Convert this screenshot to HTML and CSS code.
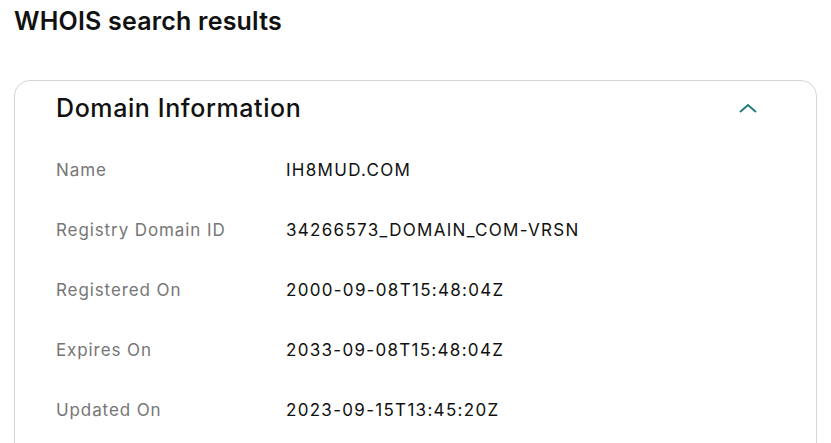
FILE: index.html
```html
<!DOCTYPE html>
<html>
<head>
<meta charset="utf-8">
<link rel="stylesheet" href="styles.css">
</head>
<body>
<div class="page">
  <h1 class="title">WHOIS search results</h1>
  <section class="card">
    <div class="card-head">
      <h2 class="card-title">Domain Information</h2>
      <svg class="chevron" width="20" height="12" viewBox="0 0 20 12"><path d="M2 10 L10 3 L18 10" fill="none" stroke="#1b7b7b" stroke-width="1.8"/></svg>
    </div>
    <div class="rows">
      <div class="row"><span class="label">Name</span><span class="value">IH8MUD.COM</span></div>
      <div class="row"><span class="label">Registry Domain ID</span><span class="value">34266573_DOMAIN_COM-VRSN</span></div>
      <div class="row"><span class="label">Registered On</span><span class="value">2000-09-08T15:48:04Z</span></div>
      <div class="row"><span class="label">Expires On</span><span class="value">2033-09-08T15:48:04Z</span></div>
      <div class="row"><span class="label">Updated On</span><span class="value">2023-09-15T13:45:20Z</span></div>
    </div>
  </section>
</div>
</body>
</html>
```
FILE: styles.css
```css
html, body { margin: 0; padding: 0; background: #fff; }
body { font-family: Inter, "Noto Sans", sans-serif; color: #111; }
.page { padding: 5px 14px 0 14px; }
.title { margin: 0; font-size: 25px; font-weight: 600; line-height: 32px; letter-spacing: 0.2px; }
.card { margin-top: 43px; border: 1px solid #d6d6d6; border-radius: 16px; padding: 0 0 0 41px; height: 400px; }
.card-head { display: flex; align-items: center; justify-content: space-between; height: 53px; padding-right: 58px; }
.card-title { margin: 0; font-size: 25px; font-weight: 500; letter-spacing: 0.6px; }
.chevron { display: block; }
.rows { display: flex; flex-direction: column; padding-top: 6px; }
.row { display: flex; align-items: center; height: 60px; font-size: 17px; }
.label { width: 230px; color: #767676; letter-spacing: 0.9px; }
.value { color: #111; letter-spacing: 1.3px; }
```
